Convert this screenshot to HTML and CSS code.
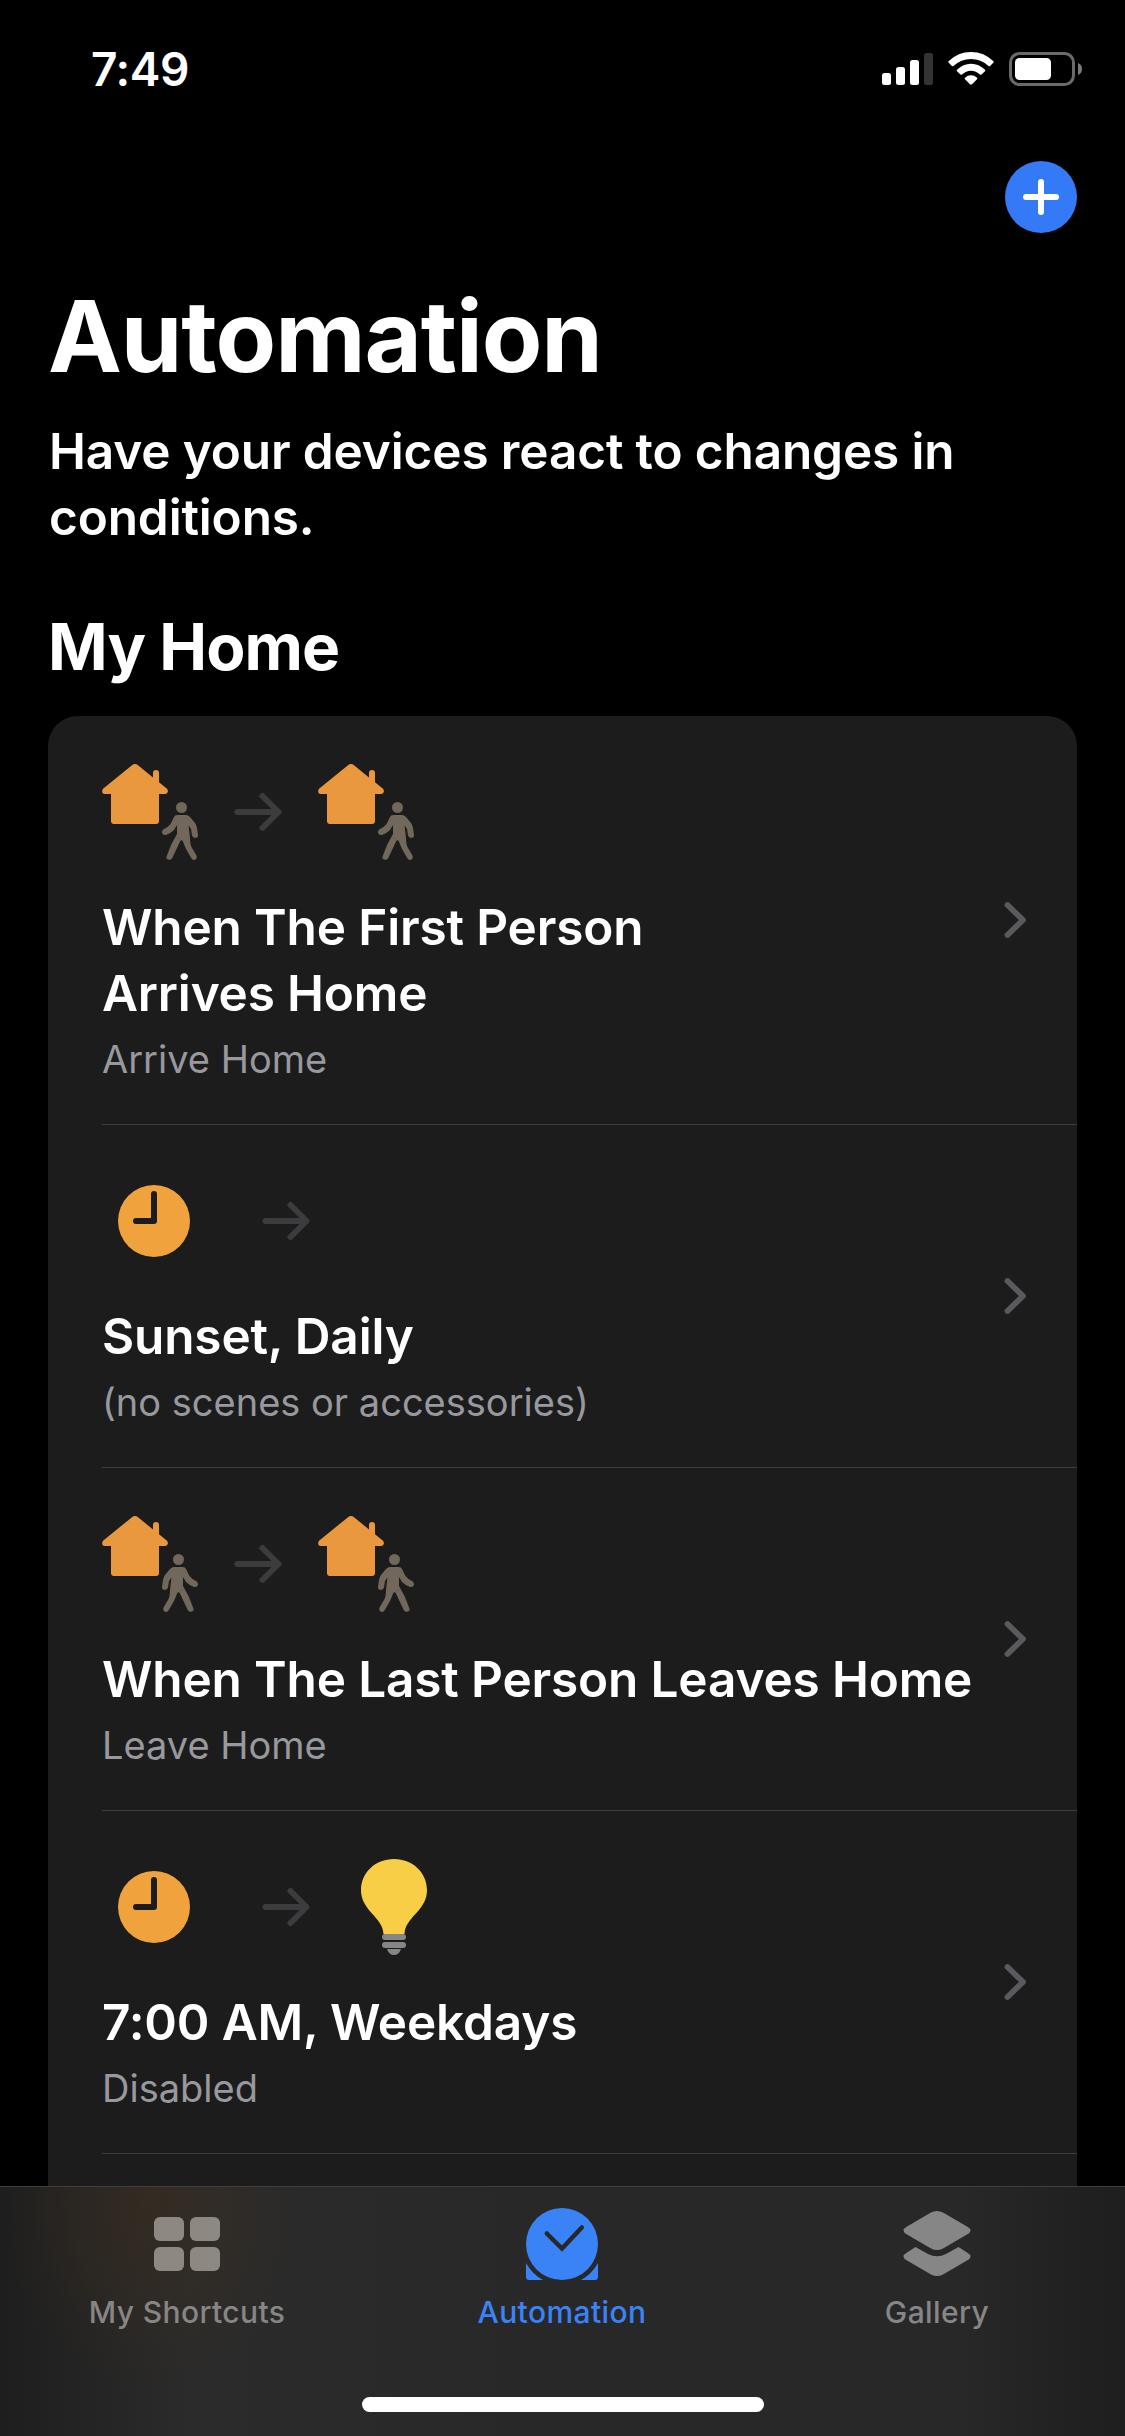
FILE: index.html
```html
<!DOCTYPE html>
<html lang="en">
<head>
<meta charset="utf-8">
<title>Automation</title>
<link rel="stylesheet" href="styles.css">
</head>
<body>
<svg class="defs" width="0" height="0" aria-hidden="true">
  <symbol id="house" viewBox="0 0 66 60">
    <path d="M30 1.2Q33 -1.2 36 1.2L51 13.4V9Q51 6 54 6T57 9V18.2L65 24.800Q66.500 27 65.500 28.500T63 30H57V57Q57 60 54 60H12Q9 60 9 57V30H3Q1 30 .4 28.400T1 24.800Z"/>
  </symbol>
  <symbol id="walker" viewBox="0 0 36 58">
    <circle cx="19.500" cy="5.500" r="5.500"/>
    <path d="M15 13H24Q26 13 28 15L33 21Q34.500 23 35 26L36 33Q36 36 33.500 36T30 33.500L29 27L26.500 23.500L28 36Q28 43 30 46L34.500 53.500Q35.500 56 33.500 57.500T29.500 56.500L24 47L20.500 38.500H18.500L15 46L10 56.500Q8.500 58.500 6 57.500T4.800 54L9 43L15 32V23L12 28Q9 31 4 33Q1.500 33.500 .4 31.500T1.200 27.500Q6 25.500 8.500 22L12 15Q13 13 15 13Z"/>
  </symbol>
  <symbol id="arrow" viewBox="0 0 48 38">
    <path d="M3.500 19H44M28.500 3L44.500 19L28.500 35" fill="none" stroke="currentColor" stroke-width="6" stroke-linecap="round" stroke-linejoin="round"/>
  </symbol>
  <symbol id="clock" viewBox="0 0 72 72">
    <circle cx="36" cy="36" r="36" fill="#f0a33c"/>
    <path d="M36 9V36H18" fill="none" stroke="#1c1c1c" stroke-width="6" stroke-linecap="round" stroke-linejoin="round"/>
  </symbol>
  <symbol id="chevron" viewBox="0 0 24 38">
    <path d="M4.500 4L20 19L4.500 34" fill="none" stroke="currentColor" stroke-width="5.800" stroke-linecap="round" stroke-linejoin="round"/>
  </symbol>
</svg>

<header class="status">
  <span class="time">7:49</span>
  <div class="indicators">
    <svg width="51" height="32" viewBox="0 0 51 32" fill="#fff"><rect y="20" width="9" height="12" rx="2.500"/><rect x="14" y="14" width="9" height="18" rx="2.500"/><rect x="28" y="7" width="9" height="25" rx="2.500"/><rect x="42" width="9" height="32" rx="2.500" fill="#333"/></svg>
    <svg width="46" height="33" viewBox="0 0 46 33" fill="#fff"><path d="M.5 9.300Q10 0 23 0T45.500 9.300Q46 10 45.500 10.500L42 14Q41.300 14.600 40.500 14Q33 7 23 7T5.500 14Q4.700 14.600 4 14L.5 10.500Q0 10 .5 9.300Z"/><path d="M9 17.800Q15 11.700 23 11.700T37 17.800Q37.700 18.500 37 19.200L33.500 22.500Q32.700 23 32 22.500Q28 18.700 23 18.700T14 22.500Q13.300 23 12.500 22.500L9 19.200Q8.300 18.500 9 17.800Z"/><path d="M17 25.700Q19.500 23.300 23 23.300T29 25.700Q29.700 26.500 29 27.200L24 32.300Q23 33.200 22 32.300L17 27.200Q16.300 26.500 17 25.700Z"/></svg>
    <svg width="73" height="34" viewBox="0 0 73 34"><rect x="1.500" y="1.500" width="63" height="31" rx="9" fill="none" stroke="#6a6a6a" stroke-width="3"/><rect x="6" y="6" width="36" height="22" rx="4.500" fill="#fff"/><path d="M69 11Q73 12.500 73 17T69 23Z" fill="#7a7a7a"/></svg>
  </div>
</header>

<div class="toolbar">
  <button class="add" aria-label="Add">
    <svg width="36" height="36" viewBox="0 0 36 36"><path d="M18 3V33M3 18H33" stroke="#fff" stroke-width="6" stroke-linecap="round"/></svg>
  </button>
</div>

<main class="content">
  <h1 class="title">Automation</h1>
  <p class="intro">Have your devices react to changes in<br>conditions.</p>
  <h2 class="section">My Home</h2>
  <div class="card">
    <article class="row">
      <div class="row-main">
        <div class="icons">
          <div class="presence"><svg class="house"><use href="#house"/></svg><svg class="walker"><use href="#walker"/></svg></div>
          <svg class="arrow"><use href="#arrow"/></svg>
          <div class="presence"><svg class="house"><use href="#house"/></svg><svg class="walker"><use href="#walker"/></svg></div>
        </div>
        <h3 class="name">When The First Person<br>Arrives Home</h3>
        <p class="detail">Arrive Home</p>
      </div>
      <svg class="chevron"><use href="#chevron"/></svg>
    </article>
    <article class="row">
      <div class="row-main">
        <div class="icons timed">
          <svg class="clock"><use href="#clock"/></svg>
          <svg class="arrow"><use href="#arrow"/></svg>
        </div>
        <h3 class="name">Sunset, Daily</h3>
        <p class="detail">(no scenes or accessories)</p>
      </div>
      <svg class="chevron"><use href="#chevron"/></svg>
    </article>
    <article class="row">
      <div class="row-main">
        <div class="icons">
          <div class="presence"><svg class="house"><use href="#house"/></svg><svg class="walker leaving"><use href="#walker"/></svg></div>
          <svg class="arrow"><use href="#arrow"/></svg>
          <div class="presence"><svg class="house"><use href="#house"/></svg><svg class="walker leaving"><use href="#walker"/></svg></div>
        </div>
        <h3 class="name">When The Last Person Leaves Home</h3>
        <p class="detail">Leave Home</p>
      </div>
      <svg class="chevron"><use href="#chevron"/></svg>
    </article>
    <article class="row">
      <div class="row-main">
        <div class="icons timed">
          <svg class="clock"><use href="#clock"/></svg>
          <svg class="arrow"><use href="#arrow"/></svg>
          <svg class="bulb" viewBox="0 0 66 96"><path d="M33 0C52 0 66 14 66 31C66 52 44 58 43.500 75H22.500C22 58 0 52 0 31C0 14 14 0 33 0Z" fill="#f8ce46"/><g fill="#868686"><rect x="21" y="75" width="24" height="6" rx="3"/><rect x="21" y="83" width="24" height="6" rx="3"/><path d="M26 90H40Q38 96 33 96T26 90Z"/></g></svg>
        </div>
        <h3 class="name">7:00 AM, Weekdays</h3>
        <p class="detail">Disabled</p>
      </div>
      <svg class="chevron"><use href="#chevron"/></svg>
    </article>
  </div>
</main>

<nav class="tabs">
  <div class="tab-list">
    <a class="tab">
      <svg class="tab-icon" viewBox="0 0 72 72" fill="#8d8982"><rect x="3" y="9" width="30" height="24" rx="6"/><rect x="39" y="9" width="30" height="24" rx="6"/><rect x="3" y="39" width="30" height="24" rx="6"/><rect x="39" y="39" width="30" height="24" rx="6"/></svg>
      <span class="tab-label">My Shortcuts</span>
    </a>
    <a class="tab active">
      <svg class="tab-icon" viewBox="0 0 72 72" fill="#3a83f7"><circle cx="36" cy="36" r="36"/><path d="M0 55Q6 66 17 72H3Q0 72 0 69ZM72 55Q66 66 55 72H69Q72 72 72 69Z"/><path d="M20.800 25.500L36 40.500L55.800 19.500" fill="none" stroke="#282828" stroke-width="4.500" stroke-linecap="round" stroke-linejoin="miter"/></svg>
      <span class="tab-label">Automation</span>
    </a>
    <a class="tab">
      <svg class="tab-icon" viewBox="0 0 72 72" fill="#868686"><path d="M30 4.500Q36 1.500 42 4.500L66 18.500Q73 22.500 66 26.500L42 40.500Q36 43.500 30 40.500L6 26.500Q-1 22.500 6 18.500Z"/><path d="M14.500 39L27 46Q36 50.500 45 46L57.500 39L66 44.500Q73 48.500 66 52.500L42 66.500Q36 69.500 30 66.500L6 52.500Q-1 48.500 6 44.500Z"/></svg>
      <span class="tab-label">Gallery</span>
    </a>
  </div>
  <div class="home-bar"></div>
</nav>
</body>
</html>
```
FILE: styles.css
```css
* { box-sizing: border-box; }

body {
  margin: 0;
  width: 1125px;
  height: 2436px;
  display: flex;
  flex-direction: column;
  overflow: hidden;
  background: #000;
  color: #fff;
  font-family: Inter, "Liberation Sans", sans-serif;
}

svg { display: block; flex: none; }
.defs { position: absolute; }
h1, h2, h3, p { margin: 0; }

.status {
  display: flex;
  justify-content: space-between;
  height: 132px;
  flex: none;
  padding: 42px 43px 0 91px;
}
.time { font-size: 46px; font-weight: 600; line-height: 54px; letter-spacing: -0.4px; }
.indicators { display: flex; align-items: flex-start; padding-top: 10px; }
.indicators svg:nth-child(1) { margin: 1px 15px 0 0; }
.indicators svg:nth-child(2) { margin-right: 15px; }

.toolbar {
  display: flex;
  justify-content: flex-end;
  flex: none;
  height: 144px;
  padding: 29px 48px 0 0;
}
.add {
  display: flex;
  align-items: center;
  justify-content: center;
  width: 72px;
  height: 72px;
  padding: 0;
  border: 0;
  border-radius: 50%;
  background: #347af6;
}

.content {
  flex: 1;
  min-height: 0;
  overflow: hidden;
  display: flex;
  flex-direction: column;
  padding: 0 48px;
}
.title { font-size: 99px; line-height: 120px; font-weight: 700; letter-spacing: -1.1px; }
.intro { margin-top: 22px; padding-left: 1px; font-size: 49.5px; line-height: 66px; font-weight: 600; letter-spacing: -0.13px; }
.section { margin-top: 57px; font-size: 64px; line-height: 80px; font-weight: 700; letter-spacing: -0.9px; }

.card {
  flex: 1;
  min-height: 0;
  margin-top: 29px;
  padding-left: 54px;
  overflow: hidden;
  border-radius: 30px 30px 0 0;
  background: #1c1c1c;
}
.row {
  display: flex;
  align-items: center;
  justify-content: space-between;
  padding: 48px 50px 39px 0;
  border-bottom: 1px solid #3d3d3f;
}
.row-main { white-space: nowrap; }
.icons { display: flex; align-items: center; height: 96px; gap: 36px; }
.timed { gap: 72px; padding-left: 16px; }
.presence { display: grid; width: 96px; height: 96px; }
.house, .walker { grid-area: 1 / 1; }
.house { width: 66px; height: 60px; fill: #e9983e; }
.walker { width: 36px; height: 58px; fill: #72675b; place-self: end; }
.leaving { transform: scaleX(-1); }
.arrow { width: 48px; height: 38px; color: #3c3c3e; }
.clock { width: 72px; height: 72px; }
.bulb { width: 66px; height: 96px; margin-left: -21px; }
.name { margin-top: 34px; font-size: 49.5px; line-height: 66px; font-weight: 600; letter-spacing: -0.15px; }
.detail { margin-top: 7px; font-size: 38px; line-height: 52px; color: #98989f; }
.chevron { width: 24px; height: 38px; margin-bottom: 9px; color: #5a5a5e; }

.tabs {
  flex: none;
  height: 250px;
  display: flex;
  flex-direction: column;
  justify-content: space-between;
  align-items: center;
  padding: 21px 0 24px;
  border-top: 1px solid #3f3f41;
  background:
    radial-gradient(ellipse 150px 190px at 150px 15px, rgba(62, 46, 28, .55), transparent),
    linear-gradient(90deg, #1e1e1e 0, #2b2b2b 190px, #282828 560px, #282828 960px, #1e1e1e 100%);
}
.tab-list { display: grid; grid-template-columns: 374px 376px 374px; align-self: stretch; }
.tab { display: flex; flex-direction: column; align-items: center; color: #868686; }
.active { color: #3a83f7; }
.tab-icon { width: 72px; height: 72px; }
.tab-label { margin-top: 13px; font-size: 30px; line-height: 38px; font-weight: 500; letter-spacing: 0.4px; }
.home-bar { width: 402px; height: 15px; border-radius: 8px; background: #fff; }
```
